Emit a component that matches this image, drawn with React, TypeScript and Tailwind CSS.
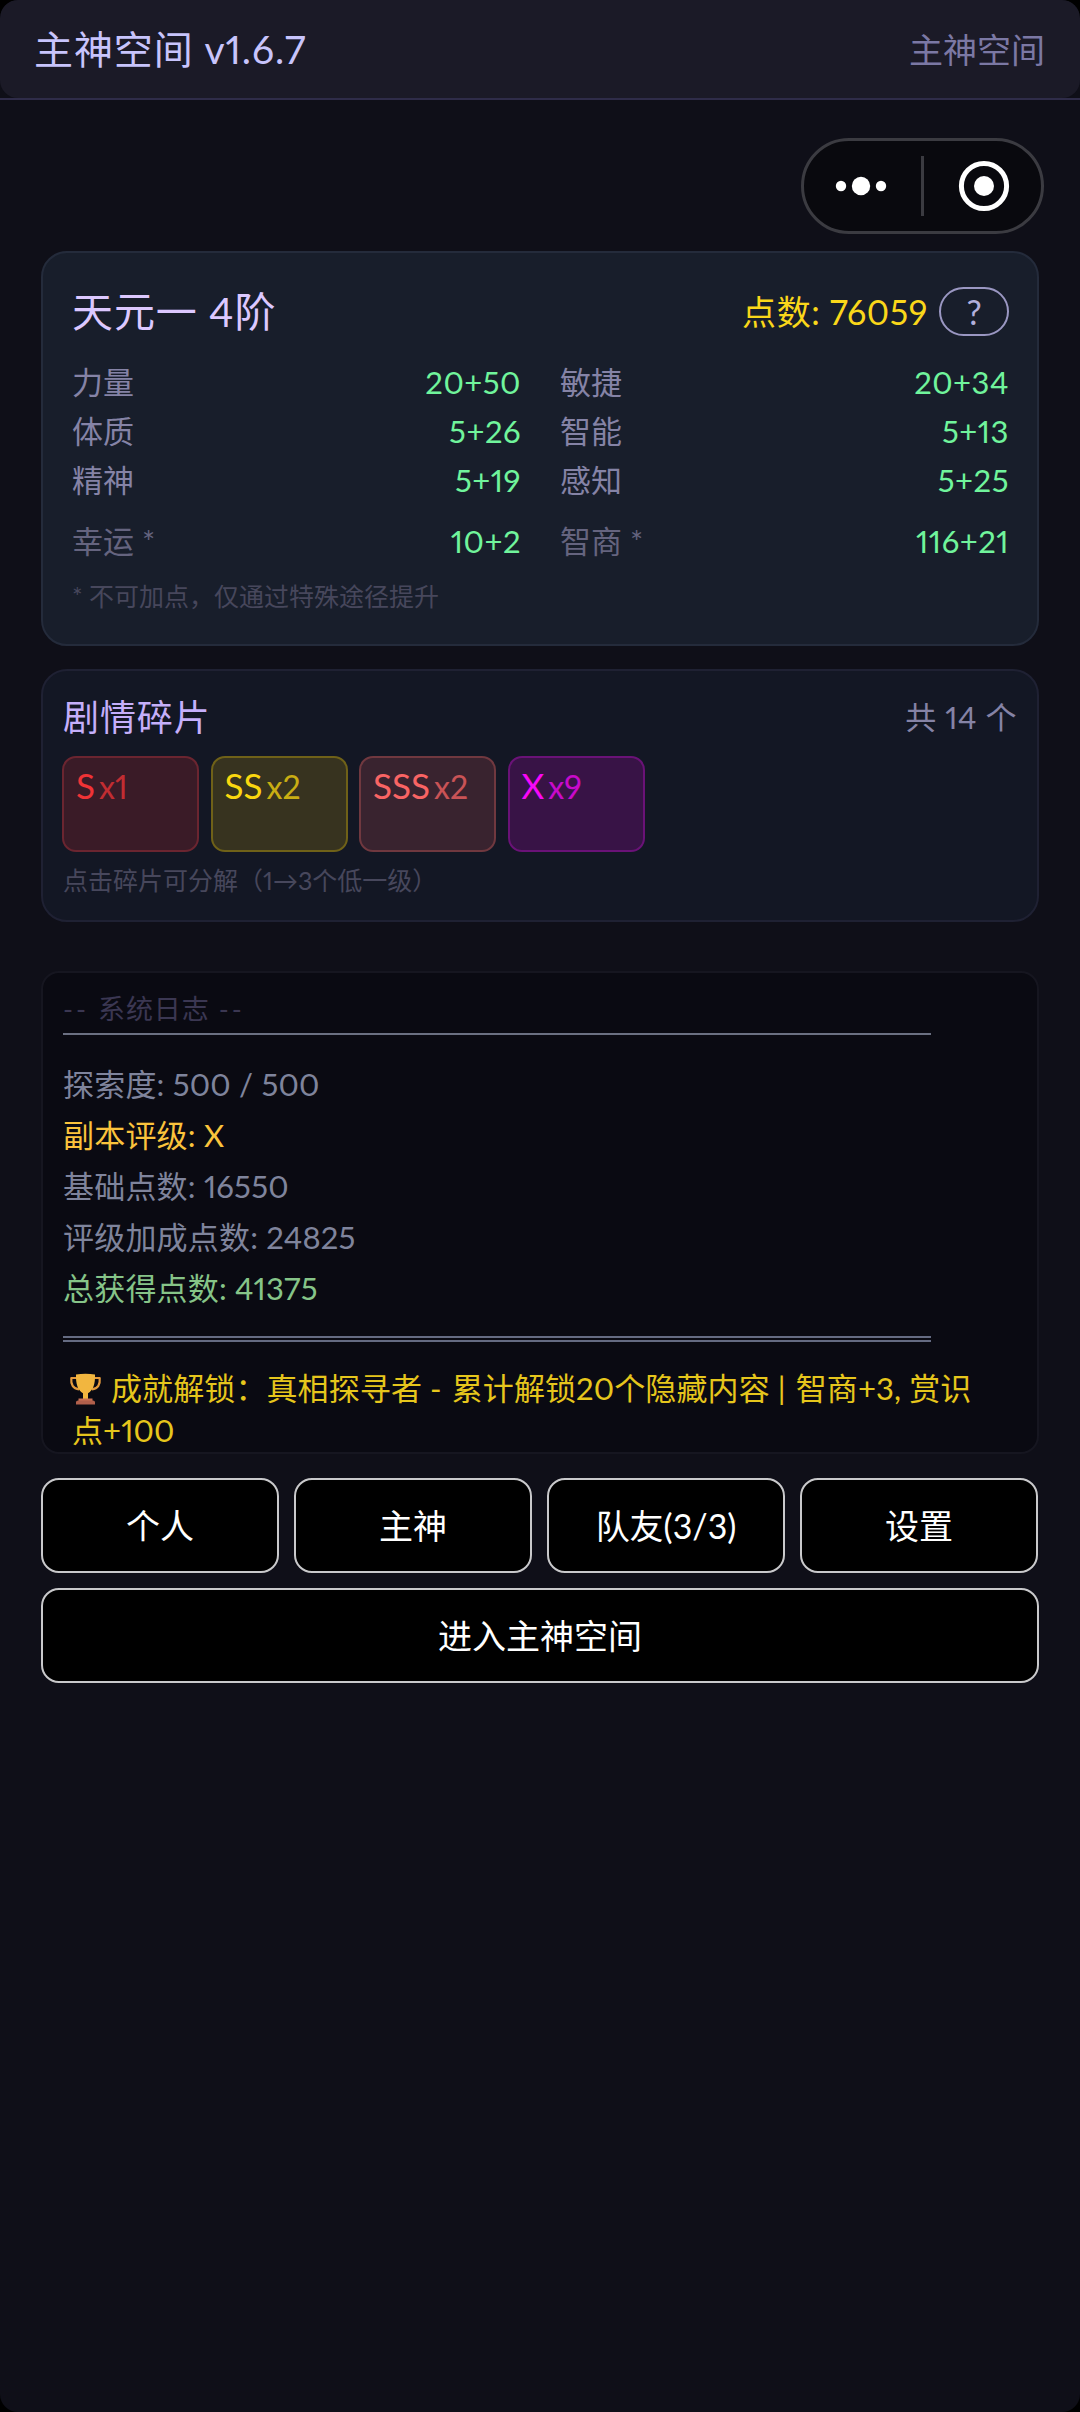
import clsx from 'clsx';

type Stat = {
  label: string;
  value: string;
  locked?: boolean;
};

type Fragment = {
  rank: string;
  count: number;
  box: string;
  text: string;
};

const stats: Stat[] = [
  { label: '力量', value: '20+50' },
  { label: '敏捷', value: '20+34' },
  { label: '体质', value: '5+26' },
  { label: '智能', value: '5+13' },
  { label: '精神', value: '5+19' },
  { label: '感知', value: '5+25' },
];

const lockedStats: Stat[] = [
  { label: '幸运 *', value: '10+2', locked: true },
  { label: '智商 *', value: '116+21', locked: true },
];

const fragments: Fragment[] = [
  { rank: 'S', count: 1, box: 'bg-[#3a1b27] border-[#6b2530]', text: 'text-[#f03336]' },
  { rank: 'SS', count: 2, box: 'bg-[#37331f] border-[#6f6118]', text: 'text-[#fad70f]' },
  { rank: 'SSS', count: 2, box: 'bg-[#39232f] border-[#70383f]', text: 'text-[#f96464]' },
  { rank: 'X', count: 9, box: 'bg-[#381346] border-[#6a1277]', text: 'text-[#f808f8]' },
];

const logs = [
  { text: '探索度: 500 / 500', color: 'text-[#7f849c]' },
  { text: '副本评级: X', color: 'text-[#fbc33c]' },
  { text: '基础点数: 16550', color: 'text-[#7f849c]' },
  { text: '评级加成点数: 24825', color: 'text-[#7f849c]' },
  { text: '总获得点数: 41375', color: 'text-[#86c488]' },
];

const menu = ['个人', '主神', '队友(3/3)', '设置'];

function StatRow({ label, value, locked }: Stat) {
  return (
    <div className="flex h-[49px] items-center justify-between text-[31px] leading-[49px]">
      <span className={locked ? 'text-[#65647f]' : 'text-[#8583a6]'}>{label}</span>
      <span className="tracking-[0.5px] text-[#70f49c]">{value}</span>
    </div>
  );
}

function Trophy() {
  return (
    <svg viewBox="0 0 32 32" className="mr-[9px] -ml-[3px] inline-block h-8 w-[33px] align-[-5px]">
      <path d="M7.5 5H1.800c-.6 6.400 1.700 11 7.700 11.400M24.500 5h5.700c.6 6.400-1.700 11-7.700 11.400" fill="none" stroke="#e59a3c" strokeWidth="2.200" strokeLinejoin="round" />
      <path d="M6.500 1.500Q16 .2 25.500 1.500C25.800 11 23.800 17 18.500 20.300V27h-5v-6.700C8.200 17 6.200 11 6.500 1.500Z" fill="#f2b63f" />
      <path d="M9 25.500h14v3H9z" fill="#c87052" />
      <path d="M6.500 28.800Q7.200 27.500 9 27.500h14q1.800 0 2.500 1.300v2.700h-19z" fill="#b05f4b" />
    </svg>
  );
}

function Capsule() {
  return (
    <div className="flex h-24 w-[243px] items-center rounded-full border-[3px] border-[#3b3b41] bg-[#09090e]">
      <svg viewBox="0 0 237 90" className="h-[90px] w-[237px]">
        <g fill="#fff">
          <circle cx="37" cy="45" r="5.200" />
          <circle cx="57" cy="45" r="9.200" />
          <circle cx="77" cy="45" r="5.200" />
          <circle cx="180" cy="45" r="10" />
        </g>
        <path d="M118.500 15v60" stroke="#3b3b41" strokeWidth="3" />
        <circle cx="180" cy="45" r="22.600" fill="none" stroke="#fff" strokeWidth="5" />
      </svg>
    </div>
  );
}

export default function App() {
  return (
    <div lang="zh-CN" className="h-[2412px] w-[1080px] bg-black">
      <div className="flex h-full flex-col overflow-hidden rounded-[18px] bg-[#0f0f18] font-['Lato','Noto_Sans_CJK_SC',sans-serif] proportional-nums">
        <header className="h-[100px] border-b-2 border-[#2f2c49]">
          <div className="flex h-[98px] items-center justify-between rounded-[18px] bg-[#1b1a27] pr-[35px] pl-[34px]">
            <h1 className="text-[39px] leading-[97px] tracking-[0.9px] text-[#c8c4fc]">主神空间 v1.6.7</h1>
            <span className="text-[34px] leading-[97px] text-[#7b78a4]">主神空间</span>
          </div>
        </header>

        {/* 胶囊按钮 */}
        <div className="mt-[38px] flex justify-end pr-9">
          <Capsule />
        </div>

        <main className="mt-[17px] flex flex-col px-[41px]">
          {/* 角色面板 */}
          <section className="h-[395px] rounded-[26px] border-2 border-[#242b3b] bg-[#181e2b] pt-[34px] pr-[28px] pl-[29px]">
            <div className="flex h-[49px] items-center justify-between">
              <h2 className="text-[41px] leading-[49px] tracking-[0.9px] text-[#dcc8ff]">天元一 4阶</h2>
              <div className="flex items-center gap-[11px]">
                <span className="text-[34px] leading-[49px] tracking-[0.6px] text-[#fad71a]">点数: 76059</span>
                <button className="h-[49px] w-[70px] rounded-[25px] border-2 border-[#9a97c2] text-[34px] leading-[45px] text-[#b3b0dc]">
                  ?
                </button>
              </div>
            </div>
            <div className="mt-[22px] grid grid-cols-2 gap-x-[39px]">
              {stats.map((stat) => (
                <StatRow key={stat.label} {...stat} />
              ))}
            </div>
            <div className="mt-3 grid grid-cols-2 gap-x-[39px]">
              {lockedStats.map((stat) => (
                <StatRow key={stat.label} {...stat} />
              ))}
            </div>
            <p className="mt-[10px] text-[25px] leading-[40px] text-[#47475c]">* 不可加点，仅通过特殊途径提升</p>
          </section>

          {/* 剧情碎片 */}
          <section className="mt-[23px] h-[253px] rounded-[26px] border-2 border-[#1f2133] bg-[#131724] px-[19px] pt-[23px]">
            <div className="flex h-[46px] items-center justify-between px-px">
              <h2 className="text-[36px] leading-[46px] tracking-[0.9px] text-[#c5affa]">剧情碎片</h2>
              <span className="text-[31px] leading-[46px] tracking-[0.5px] text-[#8583a6]">共 14 个</span>
            </div>
            <div className="mt-[16px] flex gap-[11.5px]">
              {fragments.map((f) => (
                <div
                  key={f.rank}
                  className={clsx('h-24 w-[137px] rounded-[14px] border-2 px-[12px] pt-[7px] leading-[40px]', f.box, f.text)}
                >
                  <span className="text-[35px]">{f.rank}</span>
                  <span className="ml-[4px] text-[32px] opacity-75">x{f.count}</span>
                </div>
              ))}
            </div>
            <p className="mt-[8px] px-px text-[25px] leading-[40px] text-[#47475c]">点击碎片可分解（1→3个低一级）</p>
          </section>

          {/* 系统日志 */}
          <section className="mt-[49px] h-[483px] overflow-hidden rounded-[18px] border-2 border-[#161620] bg-[#0a0a12] px-5 pt-4">
            <p className="flex gap-[9px] text-[27px] leading-[40px] tracking-[0.9px] text-[#3b3752]">
              <span className="tracking-[3px]">--</span>
              <span>系统日志</span>
              <span className="tracking-[3px]">--</span>
            </p>
            <div className="mt-[4px] h-0.5 w-[868px] bg-[#6b7082]" />
            <div className="mt-[24px]">
              {logs.map((log) => (
                <p key={log.text} className={clsx('text-[31px] leading-[51px] tracking-[0.2px]', log.color)}>
                  {log.text}
                </p>
              ))}
            </div>
            <div className="mt-[22px] h-1.5 w-[868px] border-y-2 border-[#656b82]" />
            <p className="mt-[25px] pl-[9px] text-[31px] leading-[42px] tracking-[0.1px] whitespace-nowrap text-[#e6c61c]">
              <Trophy />
              成就解锁：真相探寻者 <span className="mr-[2px]">-</span> 累计解锁20个隐藏内容{' '}
              <span className="mr-[2px]">|</span> 智商+3, 赏识
              <br />
              点+100
            </p>
          </section>

          <nav className="mt-6 grid grid-cols-4 gap-x-[15px] pr-px">
            {menu.map((item) => (
              <button
                key={item}
                className="h-[95px] rounded-[18px] border-2 border-[#c9c9cb] bg-black text-[34px] leading-[89px] text-white"
              >
                {item}
              </button>
            ))}
          </nav>
          <button className="mt-[15px] h-[95px] rounded-[18px] border-2 border-[#c9c9cb] bg-black text-[34px] leading-[89px] text-white">
            进入主神空间
          </button>
        </main>
      </div>
    </div>
  );
}
